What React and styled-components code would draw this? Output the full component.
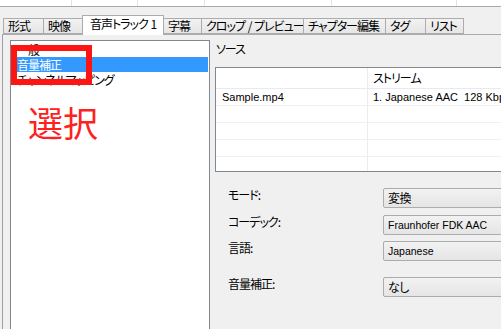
import React from "react";
import styled, { createGlobalStyle } from "styled-components";

const GlobalStyle = createGlobalStyle`
  html, body {
    margin: 0;
    padding: 0;
    background: #f0f0f0;
    overflow: hidden;
  }
  body {
    font-family: "Noto Sans CJK JP", sans-serif;
    font-size: 12px;
    color: #000;
    font-feature-settings: "palt";
    letter-spacing: -1px;
  }
`;

const latinFont = '"Liberation Sans", "Noto Sans CJK JP", sans-serif';

const Page = styled.div`
  width: 501px;
  height: 329px;
  overflow: hidden;
  display: flex;
  flex-direction: column;
`;

/* strip of the table behind the dialog */
const TopStrip = styled.div`
  display: flex;
  height: 6px;
  background: #fff;
  border-bottom: 1px solid #a9a9a9;
  flex-shrink: 0;
`;

const StripCell = styled.div`
  width: ${p => p.$w}px;
  flex-shrink: 0;
  border-right: 1px solid #e3e3e3;
  box-sizing: border-box;
`;

const TabBar = styled.div`
  display: flex;
  align-items: flex-end;
  height: 19px;
  margin-top: 8px;
  padding-left: 3px;
  flex-shrink: 0;
  position: relative;
  z-index: 1;
`;

const Tab = styled.div`
  width: ${p => p.$w}px;
  height: ${p => (p.$active ? 20 : 16)}px;
  margin-right: -1px;
  margin-bottom: ${p => (p.$active ? -1 : 0)}px;
  box-sizing: border-box;
  border: 1px solid #acacac;
  border-bottom: ${p => (p.$active ? "none" : "1px solid #acacac")};
  background: ${p =>
    p.$active ? "#fff" : "linear-gradient(#f2f2f2, #e6e6e6)"};
  padding-left: ${p => (p.$active ? 7 : 4)}px;
  padding-top: ${p => (p.$active ? 1 : 0)}px;
  line-height: 14px;
  font-size: 12px;
  word-spacing: 1px;
  white-space: nowrap;
  overflow: hidden;
  position: relative;
  z-index: ${p => (p.$active ? 2 : 1)};
`;

const Panel = styled.div`
  flex: 1;
  display: flex;
  margin-left: 2px;
  border-top: 1px solid #acacac;
  border-left: 1px solid #a0a0a0;
`;

const ListColumn = styled.div`
  position: relative;
  margin: 5px 0 0 7px;
  width: 200px;
  flex-shrink: 0;
`;

const ListBox = styled.div`
  box-sizing: border-box;
  height: 300px;
  background: #fff;
  border: 1px solid #828790;
  padding-top: 1px;
`;

const ListItem = styled.div`
  height: 15px;
  line-height: 15px;
  padding-left: 6px;
  white-space: nowrap;
  background: ${p => (p.$selected ? "#3399ff" : "transparent")};
  color: ${p => (p.$selected ? "#fff" : "#000")};
  margin-right: 1px;
`;

/* annotation overlays */
const Marker = styled.div`
  position: absolute;
  left: 1px;
  top: 5px;
  width: 81px;
  height: 40px;
  box-sizing: border-box;
  border: 6px solid #ff1414;
`;

const Note = styled.div`
  position: absolute;
  left: 18px;
  top: 64px;
  font-size: 35px;
  line-height: 35px;
  color: #ff2020;
  letter-spacing: 0;
`;

const RightPane = styled.div`
  flex: 1;
  margin-left: 5px;
  display: flex;
  flex-direction: column;
  min-width: 0;
`;

const SectionLabel = styled.div`
  margin-top: 6px;
  line-height: 16px;
  padding-left: 1px;
`;

const SourceTable = styled.div`
  margin-top: 10px;
  width: 320px;
  height: 105px;
  box-sizing: border-box;
  background: #fff;
  border: 1px solid #828790;
  overflow: hidden;
`;

const TableRow = styled.div`
  display: flex;
  height: ${p => (p.$head ? 20 : 16)}px;
  border-bottom: 1px solid ${p => (p.$head ? "#e3ebf5" : "#f0f0f0")};
`;

const Cell = styled.div`
  width: ${p => p.$w}px;
  flex-shrink: 0;
  box-sizing: border-box;
  border-right: ${p => (p.$first ? "1px solid #ececec" : "none")};
  padding-left: ${p => (p.$first ? 6 : 5)}px;
  line-height: ${p => (p.$head ? 20 : 16)}px;
  font-family: ${p =>
    p.$head ? '"Noto Sans CJK JP", sans-serif' : latinFont};
  font-size: ${p => (p.$head ? 12 : 11)}px;
  letter-spacing: ${p => (p.$head ? -1 : 0)}px;
  white-space: nowrap;
  overflow: hidden;
`;

const Form = styled.div`
  margin-top: 16px;
  display: flex;
  flex-direction: column;
`;

const FormRow = styled.div`
  display: flex;
  align-items: flex-start;
  margin-top: ${p => p.$gap}px;
`;

const Label = styled.div`
  width: 168px;
  padding-left: 13px;
  box-sizing: border-box;
  line-height: 14px;
  flex-shrink: 0;
`;

const Combo = styled.div`
  width: 150px;
  height: 20px;
  flex-shrink: 0;
  box-sizing: border-box;
  border: 1px solid #acacac;
  border-radius: 2px;
  background: linear-gradient(#f2f2f2, #e5e5e5);
  padding-left: 4px;
  line-height: 18px;
  font-family: ${p =>
    p.$latin ? latinFont : '"Noto Sans CJK JP", sans-serif'};
  font-size: ${p => (p.$latin ? 10.5 : 12)}px;
  letter-spacing: ${p => (p.$latin ? 0 : -0.5)}px;
  white-space: nowrap;
`;

const stripCells = [72, 66, 67, 127, 125, 60];

const tabs = [
  { label: "形式", w: 41 },
  { label: "映像", w: 40 },
  { label: "音声トラック 1", w: 82, active: true },
  { label: "字幕", w: 39 },
  { label: "クロップ / プレビュー", w: 103 },
  { label: "チャプター編集", w: 83 },
  { label: "タグ", w: 41 },
  { label: "リスト", w: 39 }
];

const listItems = ["一般", "音量補正", "チャンネルマッピング"];

const formRows = [
  { label: "モード:", value: "変換", gap: 0 },
  { label: "コーデック:", value: "Fraunhofer FDK AAC", latin: true, gap: 7 },
  { label: "言語:", value: "Japanese", latin: true, gap: 6 },
  { label: "音量補正:", value: "なし", gap: 16 }
];

const App = () => {
  return (
    <Page>
      <GlobalStyle />
      <TopStrip>
        {stripCells.map((w, i) => (
          <StripCell key={i} $w={w} />
        ))}
      </TopStrip>

      <TabBar>
        {tabs.map(t => (
          <Tab key={t.label} $w={t.w} $active={t.active}>
            {t.label}
          </Tab>
        ))}
      </TabBar>

      <Panel>
        <ListColumn>
          <ListBox>
            {listItems.map((item, i) => (
              <ListItem key={item} $selected={i === 1}>
                {item}
              </ListItem>
            ))}
          </ListBox>
          <Marker />
          <Note>選択</Note>
        </ListColumn>

        <RightPane>
          <SectionLabel>ソース</SectionLabel>
          <SourceTable>
            <TableRow $head>
              <Cell $w={152} $first $head />
              <Cell $w={168} $head>
                ストリーム
              </Cell>
            </TableRow>
            <TableRow>
              <Cell $w={152} $first>
                Sample.mp4
              </Cell>
              <Cell $w={168}>1. Japanese AAC&nbsp; 128 Kbps</Cell>
            </TableRow>
            {[0, 1, 2, 3].map(i => (
              <TableRow key={i}>
                <Cell $w={152} $first />
                <Cell $w={168} />
              </TableRow>
            ))}
          </SourceTable>

          <Form>
            {formRows.map(r => (
              <FormRow key={r.label} $gap={r.gap}>
                <Label>{r.label}</Label>
                <Combo $latin={r.latin}>{r.value}</Combo>
              </FormRow>
            ))}
          </Form>
        </RightPane>
      </Panel>
    </Page>
  );
};

export default App;
